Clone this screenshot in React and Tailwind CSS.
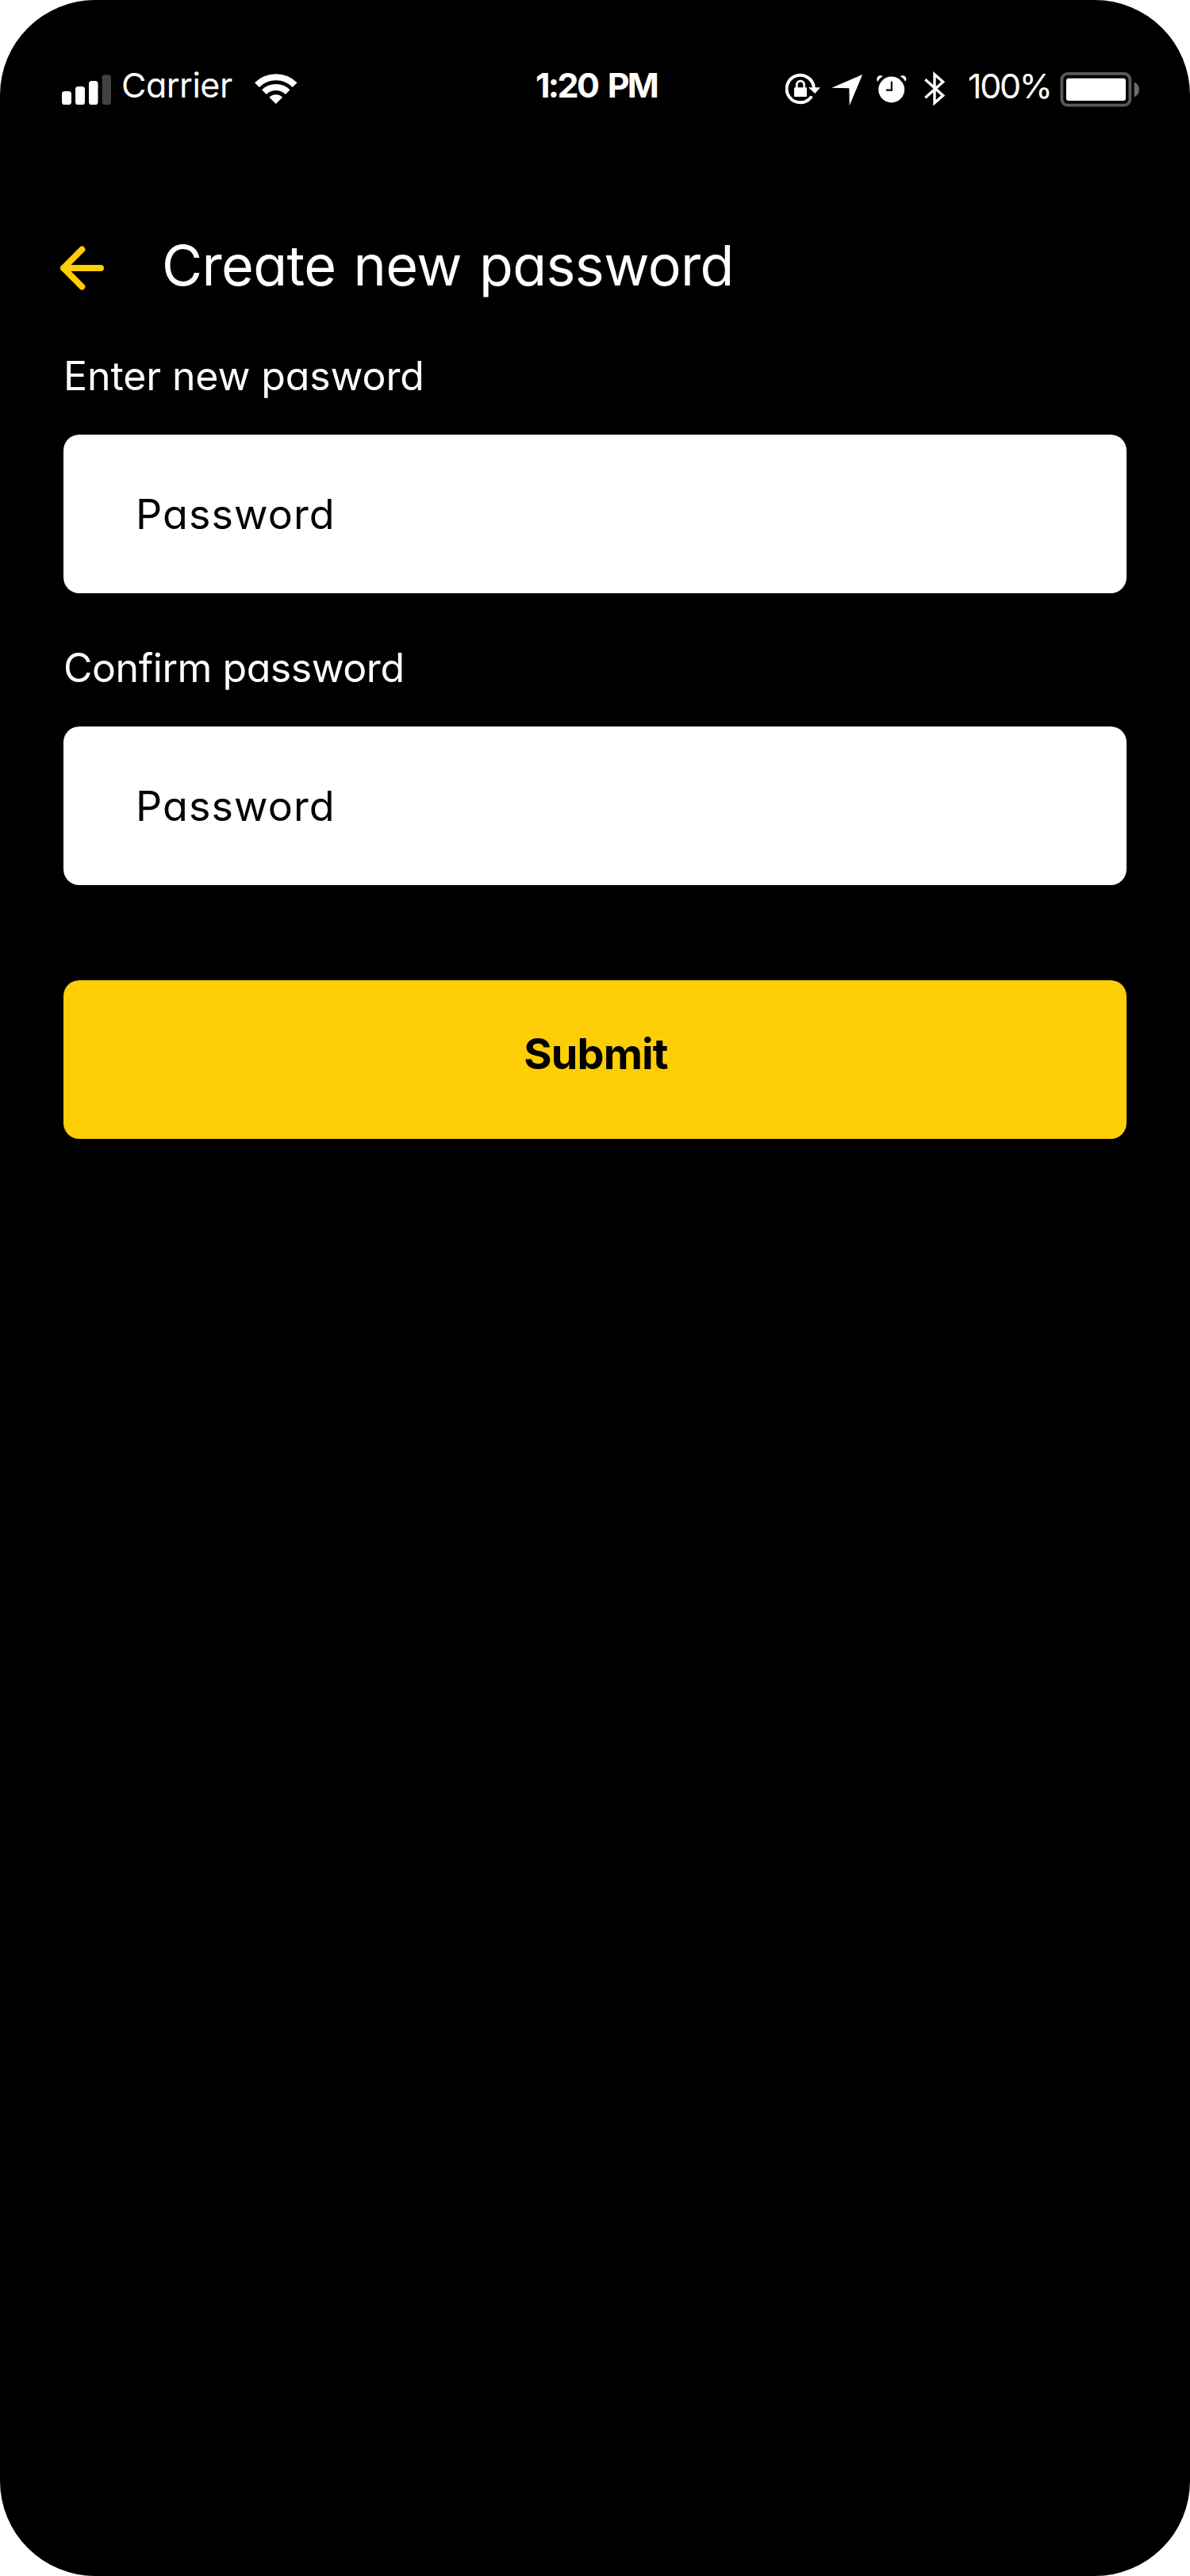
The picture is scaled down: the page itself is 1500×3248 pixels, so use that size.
function SignalBars() {
  return (
    <svg className="h-14 w-[62px] shrink-0" viewBox="78 84 62 56">
      <rect x="78" y="115" width="12" height="17" rx="3.6" fill="#fff" />
      <rect x="95" y="109" width="12" height="23" rx="3.6" fill="#fff" />
      <rect x="112" y="102" width="11.5" height="30" rx="3.6" fill="#fff" />
      <rect x="128.7" y="94.3" width="11.3" height="37.7" rx="3.6" fill="#424242" />
    </svg>
  );
}

function Wifi() {
  return (
    <svg className="h-14 w-[54px] shrink-0" viewBox="321 84 54 56" fill="#fff">
      <path d="M321 104.2A38 38 0 0 1 374.6 104.2L368.8 109.9A30 30 0 0 0 326.8 109.9Z" />
      <path d="M330.1 113.3A25 25 0 0 1 365.5 113.3L359.8 119A17 17 0 0 0 335.8 119Z" />
      <path d="M347.8 131L339.5 122.7A11.8 11.8 0 0 1 356.1 122.7Z" />
    </svg>
  );
}

function RotationLock() {
  return (
    <svg className="h-14 w-11 shrink-0" viewBox="990 84 44 56" fill="none">
      <path d="M1025.9 110.5A17.2 17.2 0 1 0 1022.2 122.8" stroke="#fff" strokeWidth="3.9" strokeLinecap="round" />
      <path d="M1019 110.3H1034L1027.3 118Z" fill="#fff" />
      <rect x="1001" y="110.2" width="16" height="11.8" rx="1" fill="#fff" />
      <path d="M1004.3 111V107A4.7 4.9 0 0 1 1013.7 107V111" stroke="#fff" strokeWidth="2.7" />
    </svg>
  );
}

function LocationArrow() {
  return (
    <svg className="h-14 w-10 shrink-0" viewBox="1048 84 40 56" fill="#fff">
      <path d="M1087.2 94L1070.7 133.2L1070.4 111.2L1048.2 110.8Z" />
    </svg>
  );
}

function Alarm() {
  return (
    <svg className="h-14 w-[38px] shrink-0" viewBox="1105 84 38 56" fill="#fff">
      <circle cx="1123.7" cy="113" r="16.4" />
      <path d="M1123.9 102.7V113.6H1117" fill="none" stroke="#000" strokeWidth="2.2" />
      <path d="M1106.6 103C1104.6 101 1104.9 98.3 1106.6 96.6C1108.4 94.8 1111.2 94.9 1112.9 96.6Q1108.4 98.5 1106.6 103Z" />
      <path d="M1141 103C1143 101 1142.7 98.3 1141 96.6C1139.2 94.8 1136.4 94.9 1134.7 96.6Q1139.2 98.5 1141 103Z" />
    </svg>
  );
}

function Bluetooth() {
  return (
    <svg className="h-14 w-[27px] shrink-0" viewBox="1165 84 27 56" fill="none">
      <path d="M1166.3 100.3L1188.7 120.4L1178 129.7V93.7L1188.7 103.3L1166.3 123.3" stroke="#fff" strokeWidth="3.4" strokeMiterlimit="10" />
    </svg>
  );
}

function Battery() {
  return (
    <svg className="h-14 w-[100px] shrink-0" viewBox="1336 84 100 56">
      <rect x="1338.4" y="92.9" width="86" height="39.8" rx="7.5" fill="none" stroke="#595959" strokeWidth="3.8" />
      <rect x="1344" y="98.7" width="75" height="28.3" rx="3" fill="#fff" />
      <path d="M1429.7 103.5C1433.8 105 1435.9 108.8 1435.9 112.9S1433.8 120.8 1429.7 122.3Z" fill="#6b6b6b" />
    </svg>
  );
}

function BackArrow() {
  return (
    <svg className="h-14 w-14 shrink-0" viewBox="76 310 56 56" fill="none">
      <path d="M127 338H80M103.3 314.5L80 338L103.3 361.5" stroke="#fdcd06" strokeWidth="8" strokeLinecap="round" strokeLinejoin="round" />
    </svg>
  );
}

function StatusBar() {
  return (
    <header className="flex h-14 items-start pl-[78px] text-[43px] leading-[47px] whitespace-nowrap">
      <SignalBars />
      <span className="ml-[13px] w-[143px] tracking-[-0.5px]">Carrier</span>
      <span className="ml-[25px]"><Wifi /></span>
      <span className="ml-[300px] w-[159px] font-bold tracking-[-2.7px] [word-spacing:5px]">1:20 PM</span>
      <span className="ml-[156px]"><RotationLock /></span>
      <span className="ml-[14px]"><LocationArrow /></span>
      <span className="ml-[17px]"><Alarm /></span>
      <span className="ml-[22px]"><Bluetooth /></span>
      <span className="ml-[28px] w-[107px] pt-px tracking-[-2.3px]">100%</span>
      <span className="ml-[9px]"><Battery /></span>
    </header>
  );
}

function Field({ label, value, labelClass }) {
  return (
    <div className="flex flex-col">
      <span className={`h-[50px] text-[50px] leading-[50px] whitespace-nowrap ${labelClass}`}>{label}</span>
      <div className="mt-[49px] h-[200px] rounded-[20px] bg-white pt-px pl-[91px] text-[52px] leading-[200px] tracking-[1.1px] text-black">
        {value}
      </div>
    </div>
  );
}

export default function App() {
  return (
    <div className="w-[1500px] bg-white">
      <main className="h-[3248px] rounded-[120px] bg-black pt-[84px] font-['Inter',sans-serif] text-white [font-feature-settings:'cv11']">
        <StatusBar />
        <div className="mt-[160px] flex h-[70px] items-center pl-[76px]">
          <span className="mt-[6px]"><BackArrow /></span>
          <h1 className="ml-[72px] text-[70px] leading-[70px] tracking-[-0.6px] whitespace-nowrap [word-spacing:3px]">Create new password</h1>
        </div>
        <form className="mt-[79px] flex flex-col px-20">
          <Field label="Enter new pasword" value="Password" labelClass="tracking-[-0.1px]" />
          <div className="mt-[69px]">
            <Field label="Confirm password" value="Password" labelClass="tracking-[-0.45px]" />
          </div>
          <button type="button" className="mt-[120px] flex h-[200px] items-start justify-center rounded-[20px] bg-[#fdcd06] pl-[2px] text-[54px] leading-[185px] font-bold tracking-[-0.9px] text-black">
            Submit
          </button>
        </form>
      </main>
    </div>
  );
}
